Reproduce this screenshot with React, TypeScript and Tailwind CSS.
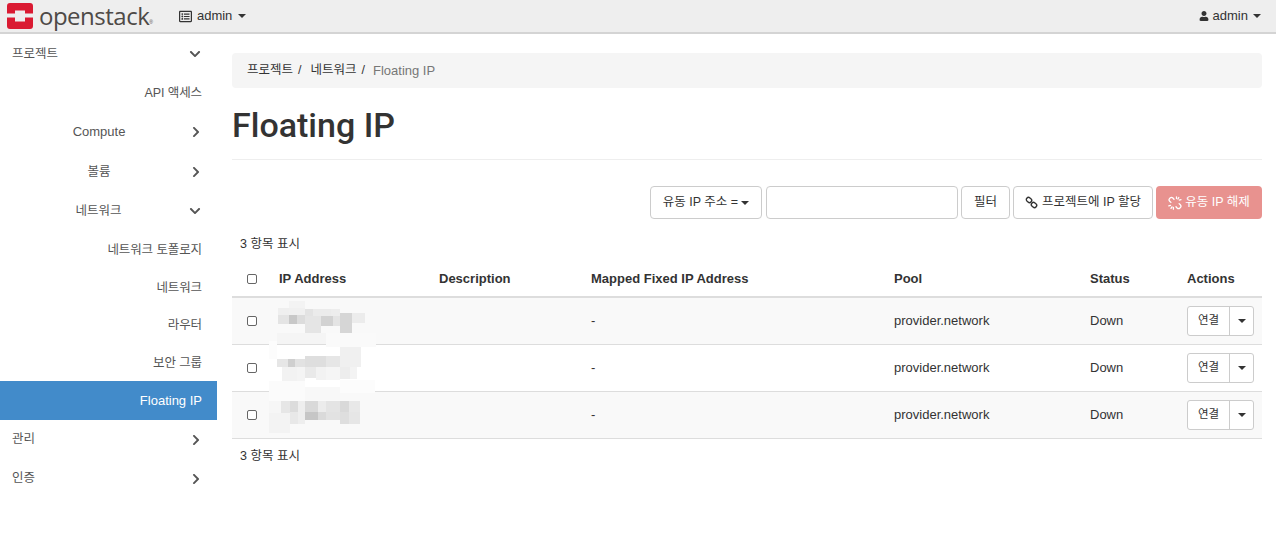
import { FaChevronDown, FaChevronRight, FaUser, FaRegListAlt } from 'react-icons/fa';

const FONT = '"Liberation Sans", "Noto Sans CJK KR", sans-serif';

function Caret({ className = '' }: { className?: string }) {
  return <span className={`inline-block h-0 w-0 border-x-[4px] border-t-[4px] border-x-transparent border-t-current ${className}`} />;
}

function ChainIcon() {
  return (
    <svg width="13" height="13" viewBox="0 0 13 13" fill="none" stroke="currentColor" strokeWidth="1.400">
      <rect x="1.200" y="1.800" width="5.600" height="4.400" rx="2.200" transform="rotate(40 4 4)" />
      <rect x="6.200" y="6.800" width="5.600" height="4.400" rx="2.200" transform="rotate(40 9 9)" />
    </svg>
  );
}

function BrokenChainIcon() {
  return (
    <svg width="14" height="14" viewBox="0 0 14 14" fill="none" stroke="currentColor" strokeWidth="1.300" strokeLinecap="round">
      <path d="M6 3.200 4.900 2a2 2 0 0 0-2.800 0l-.4.400a2 2 0 0 0 0 2.800L2.900 6.400" />
      <path d="M8 10.800 9.100 12a2 2 0 0 0 2.800 0l.4-.4a2 2 0 0 0 0-2.800l-1.200-1.200" />
      <path d="M8.500.800v1.700M10.800 1.500 9.900 3M13 3.600l-1.700.5M.800 9.800l1.700-.4M3 12.400l1-1.500M5.400 13.200v-1.700" />
    </svg>
  );
}

function Logo() {
  return (
    <div className="flex items-center">
      <svg width="26" height="26" viewBox="0 0 26 26" className="ml-[7px]">
        <path d="M3 0h20a3 3 0 0 1 3 3v7.500h-8V7.500H8v3H0V3a3 3 0 0 1 3-3z" fill="#da1a32" />
        <path d="M0 14.500h8v4h10v-4h8V23a3 3 0 0 1-3 3H3a3 3 0 0 1-3-3z" fill="#da1a32" />
      </svg>
      <span className="ml-[6px] text-[24px] font-medium leading-none tracking-[-0.5px] text-[#4e4a47]" style={{ fontFamily: '"Open Sans", sans-serif' }}>
        openstack
      </span>
      <span className="mt-[12px] text-[5px] leading-none text-[#4e4a47]">®</span>
    </div>
  );
}

function TopBar() {
  return (
    <div className="flex h-[34px] items-center justify-between border-b-2 border-[#d4d4d4] bg-[#eeeeee] text-[13px] text-[#333]">
      <div className="flex items-center">
        <Logo />
        <div className="ml-[26px] flex items-center gap-[5px]">
          <FaRegListAlt size={13} />
          <span>admin</span>
          <Caret className="ml-[1px]" />
        </div>
      </div>
      <div className="mr-[15px] flex items-center gap-[4px]">
        <FaUser size={10} />
        <span>admin</span>
        <Caret className="ml-[1px]" />
      </div>
    </div>
  );
}

function TopItem({ label, open }: { label: string; open?: boolean }) {
  return (
    <div className={`flex h-[39px] items-center justify-between pl-[12px] ${open ? 'pr-[16px]' : 'pr-[15px]'} text-[#555]`}>
      <span className={open ? 'pt-[2px]' : ''}>{label}</span>
      {open ? <FaChevronDown size={12} /> : <FaChevronRight size={12} />}
    </div>
  );
}

function GroupItem({ label, open, latin }: { label: string; open?: boolean; latin?: boolean }) {
  return (
    <div className={`flex ${latin ? 'h-[40px]' : 'h-[39px]'} items-center pl-[8px] ${open ? 'pr-[16px]' : 'pr-[15px]'} text-[#555]`}>
      <span className={`flex-1 text-center ${latin ? 'text-[13px]' : 'pt-[2px]'}`}>{label}</span>
      {open ? <FaChevronDown size={12} /> : <FaChevronRight size={12} />}
    </div>
  );
}

function LeafItem({ label, active, h = 'h-[38px]' }: { label: string; active?: boolean; h?: string }) {
  return (
    <div className={`flex ${h} items-center justify-end pr-[15px] ${active ? 'bg-[#428bca] text-[13px] text-white' : 'pt-[2px] tracking-[-0.1px] text-[#555]'}`}>
      {label}
    </div>
  );
}

function Sidebar() {
  return (
    <div className="w-[217px] shrink-0 text-[12.500px]">
      <TopItem label="프로젝트" open />
      <LeafItem label="API 액세스" h="h-[39px]" />
      <GroupItem label="Compute" latin />
      <GroupItem label="볼륨" />
      <GroupItem label="네트워크" open />
      <LeafItem label="네트워크 토폴로지" />
      <LeafItem label="네트워크" />
      <LeafItem label="라우터" h="h-[37px]" />
      <LeafItem label="보안 그룹" />
      <LeafItem label="Floating IP" active h="h-[39px]" />
      <TopItem label="관리" />
      <TopItem label="인증" />
    </div>
  );
}

function Btn({ children, className = '' }: { children: React.ReactNode; className?: string }) {
  return (
    <div className={`flex h-[33px] items-center justify-center rounded-[4px] border border-[#ccc] bg-white text-[#333] ${className}`}>
      {children}
    </div>
  );
}

function Toolbar() {
  return (
    <div className="mt-[26px] flex justify-end gap-[3px] text-[12.500px]">
      <Btn className="mr-[1px] w-[112px] gap-[3px]">
        유동 IP 주소 = <Caret />
      </Btn>
      <div className="h-[33px] w-[192px] rounded-[4px] border border-[#ccc] bg-white" />
      <Btn className="w-[49px]">필터</Btn>
      <Btn className="w-[140px] gap-[4px]">
        <ChainIcon /> 프로젝트에 IP 할당
      </Btn>
      <div className="flex h-[33px] w-[106px] items-center justify-center gap-[3px] rounded-[4px] bg-[#e8928f] text-white">
        <BrokenChainIcon /> 유동 IP 해제
      </div>
    </div>
  );
}

const rows = [0, 1, 2];

function Table() {
  return (
    <div className="text-[13px] text-[#333]">
      <div className="flex h-[36px] items-center pt-[2px] font-bold">
        <div className="w-[47px] pl-[15px]">
          <Checkbox />
        </div>
        <div className="w-[160px]">IP Address</div>
        <div className="w-[152px]">Description</div>
        <div className="w-[303px]">Mapped Fixed IP Address</div>
        <div className="w-[196px]">Pool</div>
        <div className="w-[97px]">Status</div>
        <div>Actions</div>
      </div>
      <div className="border-t-2 border-[#ddd]">
        {rows.map((r) => (
          <div key={r} className={`flex h-[47px] items-center border-b border-[#ddd] ${r % 2 === 0 ? 'bg-[#f9f9f9]' : 'bg-white'}`}>
            <div className="w-[47px] pl-[15px]">
              <Checkbox />
            </div>
            <div className="w-[312px]" />
            <div className="w-[303px]">-</div>
            <div className="w-[196px]">provider.network</div>
            <div className="w-[97px]">Down</div>
            <div className="flex h-[30px] w-[67px] rounded-[3px] border border-[#ccc] bg-white text-[11.500px]">
              <div className="flex w-[42px] items-center justify-center border-r border-[#ccc]">연결</div>
              <div className="flex flex-1 items-center justify-center">
                <Caret />
              </div>
            </div>
          </div>
        ))}
      </div>
    </div>
  );
}

function Checkbox() {
  return <div className="h-[10px] w-[10px] rounded-[2px] border border-[#666] bg-white" />;
}

// the pixelated patch that hides the addresses in the screenshot
const patches: [number, number, number, number, string][] = [
  [172, 38, 46, 24, '#f3f3f3'],
  [138, 60, 34, 22, '#efefef'],
  [172, 60, 46, 22, '#f0f0f0'],
  [218, 62, 24, 22, '#e3e3e3'],
  [242, 62, 54, 22, '#ebebeb'],
  [296, 62, 28, 22, '#ededed'],
  [138, 82, 34, 26, '#e4e4e4'],
  [172, 82, 24, 26, '#c8c8c8'],
  [196, 82, 24, 26, '#dcdcdc'],
  [218, 84, 50, 52, '#e5e5e5'],
  [268, 84, 36, 30, '#d2d2d2'],
  [304, 84, 20, 30, '#e4e4e4'],
  [324, 76, 36, 60, '#d6d6d6'],
  [360, 76, 38, 28, '#ececec'],
  [134, 136, 148, 32, '#f5f5f5'],
  [282, 136, 150, 40, '#fafafa'],
  [112, 160, 22, 52, '#fcfcfc'],
  [324, 176, 62, 60, '#f0f0f0'],
  [135, 212, 33, 26, '#e6e6e6'],
  [168, 212, 22, 26, '#cfcfcf'],
  [190, 212, 30, 26, '#e2e2e2'],
  [218, 204, 64, 34, '#dedede'],
  [282, 204, 42, 34, '#e6e6e6'],
  [150, 238, 44, 40, '#f2f2f2'],
  [194, 238, 26, 40, '#f4f4f4'],
  [220, 238, 32, 32, '#e9e9e9'],
  [252, 238, 30, 38, '#f2f2f2'],
  [282, 238, 42, 38, '#f5f5f5'],
  [324, 236, 30, 38, '#ededed'],
  [354, 236, 22, 38, '#f3f3f3'],
  [112, 280, 106, 58, '#fbfbfb'],
  [218, 296, 106, 40, '#f8f8f8'],
  [324, 276, 106, 40, '#fcfcfc'],
  [112, 338, 36, 36, '#f6f6f6'],
  [148, 338, 26, 36, '#e6e6e6'],
  [174, 338, 24, 36, '#dcdcdc'],
  [198, 338, 20, 36, '#eeeeee'],
  [218, 338, 40, 34, '#d9d9d9'],
  [258, 338, 24, 34, '#ececec'],
  [282, 338, 42, 34, '#e4e4e4'],
  [324, 338, 28, 34, '#d9d9d9'],
  [352, 338, 32, 34, '#e8e8e8'],
  [112, 374, 62, 62, '#f3f3f3'],
  [174, 372, 24, 36, '#e8e8e8'],
  [198, 372, 20, 36, '#eeeeee'],
  [218, 372, 40, 24, '#c6c6c6'],
  [258, 372, 24, 24, '#dadada'],
  [282, 372, 42, 24, '#e2e2e2'],
  [324, 372, 26, 36, '#dedede'],
  [350, 372, 34, 36, '#e6e6e6'],
];

function Patches() {
  return (
    <svg width="200" height="150" viewBox="0 0 600 450" className="absolute left-0 top-0" shapeRendering="crispEdges">
      {patches.map(([x, y, w, h, c], i) => (
        <rect key={i} x={x} y={y} width={w} height={h} fill={c} />
      ))}
    </svg>
  );
}

function Content() {
  return (
    <div className="min-w-0 flex-1 pl-[15px] pr-[14px] pt-[19px]">
      <div className="flex h-[35px] items-center rounded-[4px] bg-[#f5f5f5] pl-[15px] text-[12.500px] text-[#333]">
        <span>프로젝트</span>
        <span className="ml-[5px]">/</span>
        <span className="ml-[9px]">네트워크</span>
        <span className="ml-[5px]">/</span>
        <span className="ml-[8px] text-[13px] text-[#777]">Floating IP</span>
      </div>
      <h1 className="mt-[17px] text-[34px] font-medium leading-[40px] text-[#333]" style={{ fontFamily: 'Roboto, sans-serif' }}>
        Floating IP
      </h1>
      <div className="mt-[14px] border-t border-[#eee]" />
      <Toolbar />
      <div className="mt-[17px] pl-[8px] text-[12.500px] leading-[17px] text-[#333]">3 항목 표시</div>
      <div className="relative mt-[7px]">
        <Table />
        <div className="pointer-events-none absolute left-0 top-[28px]">
          <Patches />
        </div>
      </div>
      <div className="mt-[9px] pl-[8px] text-[12.500px] leading-[17px] text-[#333]">3 항목 표시</div>
    </div>
  );
}

export default function App() {
  return (
    <div className="h-[545px] overflow-hidden bg-white" style={{ fontFamily: FONT }}>
      <TopBar />
      <div className="flex">
        <Sidebar />
        <Content />
      </div>
    </div>
  );
}
